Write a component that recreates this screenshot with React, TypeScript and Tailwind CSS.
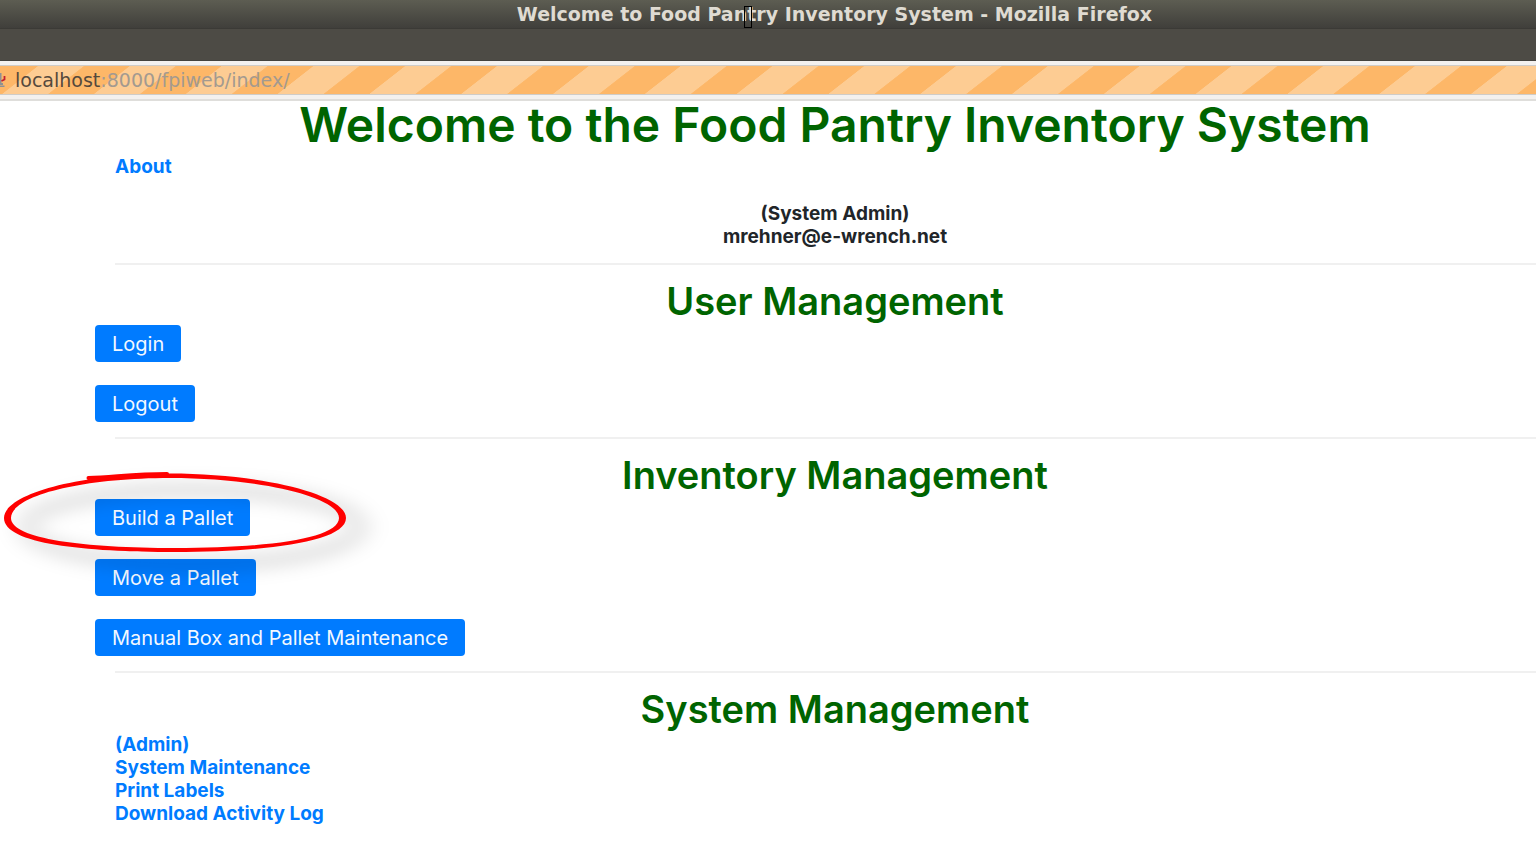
import type { ReactNode } from "react";

function StripedAddressBar() {
  return (
    <div className="relative flex h-[30px] items-center border-y border-[#cfccc8] bg-[#fdb768]">
      <svg className="absolute inset-0 h-full w-full" aria-hidden="true">
        <defs>
          <pattern
            id="stripes"
            width="91.8"
            height="100"
            patternUnits="userSpaceOnUse"
            patternTransform="translate(38 0) skewX(-52)"
          >
            <rect width="46" height="100" fill="#fdcc93" />
          </pattern>
        </defs>
        <rect width="100%" height="100%" fill="url(#stripes)" />
      </svg>
      <svg className="relative h-[18px] w-[15px] shrink-0" viewBox="0 0 15 18" aria-hidden="true">
        <path d="M0 2h1.500v10H3v2H0z" fill="#8e9194" />
        <path d="M0 14.500h4.500v1.500H0z" fill="#8e9194" />
        <path d="M4.500 5v3.500L1.500 10" fill="none" stroke="#c4202f" strokeWidth="1.800" />
      </svg>
      <p className="relative font-['DejaVu_Sans',sans-serif] text-[19px] leading-6 text-[#a39a90]">
        <span className="text-[#55493c]">localhost</span>:8000/fpiweb/index/
      </p>
    </div>
  );
}

function BrowserChrome() {
  return (
    <header>
      <div className="relative flex h-[29px] items-center justify-center border-b border-[#3b3a36] bg-linear-to-b from-[#5d5d52] to-[#403f3b] pl-[133px]">
        <p className="font-['DejaVu_Sans',sans-serif] text-[19px] leading-5 font-bold whitespace-nowrap text-[#dfdbd2]">
          Welcome to Food Pantry Inventory System - Mozilla Firefox
        </p>
        <span className="absolute top-[6px] left-[744px] h-[22px] w-2 border border-black" />
      </div>
      <div className="h-8 border-b border-[#45433e] bg-[#4d4b45]" />
      <div className="border-b-2 border-[#dfdedb] bg-[#f3f1ef] py-1">
        <StripedAddressBar />
      </div>
    </header>
  );
}

function Section({ title, children }: { title: string; children: ReactNode }) {
  return (
    <section>
      <hr className="mt-[15px] mb-[17px] border-t-2 border-[#f0f0f0]" />
      <h2 className="mb-[5px] text-center text-[38px] leading-[38px] font-semibold text-[#006400]">{title}</h2>
      {children}
    </section>
  );
}

function ActionButton({ children }: { children: ReactNode }) {
  return (
    <button
      type="button"
      className="h-[37px] rounded-[4px] bg-[#007bff] px-[17px] text-xl leading-6 whitespace-nowrap text-[#f2f8ff]"
    >
      {children}
    </button>
  );
}

function Highlight() {
  return (
    <svg
      className="pointer-events-none absolute -top-[40px] -left-[95px] h-[140px] w-[400px]"
      viewBox="0 460 400 140"
      aria-hidden="true"
    >
      <defs>
        <filter id="soft" x="-20%" y="-50%" width="150%" height="220%">
          <feGaussianBlur stdDeviation="11 8" />
        </filter>
      </defs>
      <ellipse
        cx="193"
        cy="528"
        rx="167"
        ry="37"
        fill="none"
        stroke="#000"
        strokeOpacity="0.1"
        strokeWidth="18"
        filter="url(#soft)"
      />
      <path
        fill="#f00"
        fillRule="evenodd"
        d="M4 519C4 495 80 474.500 170 474.500S346 495 346 519S265 553 175 553S4 545 4 519ZM11 519C11 540 85 549 175 549S339 540 339 519S260 479 170 479S11 497 11 519Z"
      />
      <path
        d="M88.500 479C115 478 135 475 167 475"
        fill="none"
        stroke="#f00"
        strokeWidth="4"
        strokeLinecap="round"
      />
    </svg>
  );
}

const adminLinks = ["(Admin)", "System Maintenance", "Print Labels", "Download Activity Log"];

export default function App() {
  return (
    <div className="min-h-screen overflow-x-hidden bg-white font-['Inter',sans-serif] text-[#212529]">
      <BrowserChrome />
      <main className="-mr-[19px] pl-[115px] text-[19px] leading-[23px] font-bold">
        <h1 className="mb-[6px] text-center text-[48px] leading-[48px] font-semibold text-[#006400]">
          Welcome to the Food Pantry Inventory System
        </h1>
        <a href="#about" className="text-[#007bff]">
          About
        </a>
        <div className="mt-6 text-center">
          <p>(System Admin)</p>
          <p>mrehner@e-wrench.net</p>
        </div>
        <Section title="User Management">
          <div className="-ml-5 flex flex-col items-start gap-[23px] font-normal">
            <ActionButton>Login</ActionButton>
            <ActionButton>Logout</ActionButton>
          </div>
        </Section>
        <Section title="Inventory Management">
          <div className="-ml-5 flex flex-col items-start gap-[23px] font-normal">
            <div className="relative flex">
              <ActionButton>Build a Pallet</ActionButton>
              <Highlight />
            </div>
            <ActionButton>Move a Pallet</ActionButton>
            <ActionButton>Manual Box and Pallet Maintenance</ActionButton>
          </div>
        </Section>
        <Section title="System Management">
          <ul>
            {adminLinks.map((label) => (
              <li key={label}>
                <a href="#admin" className="text-[#007bff]">
                  {label}
                </a>
              </li>
            ))}
          </ul>
        </Section>
      </main>
    </div>
  );
}
